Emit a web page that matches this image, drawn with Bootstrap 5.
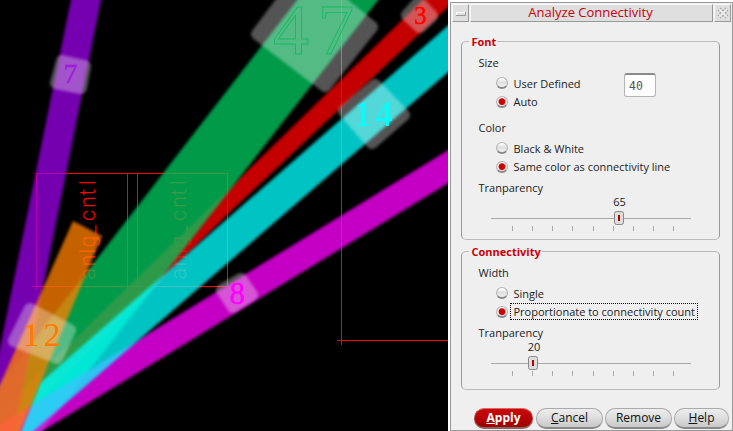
<!DOCTYPE html>
<html lang="en">
<head>
<meta charset="utf-8">
<meta name="viewport" content="width=device-width, initial-scale=1">
<title>Analyze Connectivity</title>
<link href="https://cdn.jsdelivr.net/npm/bootstrap@5.3.0/dist/css/bootstrap.min.css" rel="stylesheet">
<style>
body{width:733px;height:431px;background:#fff;font-family:"Open Sans","Noto Sans",sans-serif;font-size:11px;line-height:15px;color:#1c1c1c}
.scene{width:448px;height:431px;background:#000}
.scene svg{display:block}
.dialog{width:283px;height:429px;margin:2px 0 0 2px;background:#efefef;border:1px solid #999}
.titlebar{height:18px;margin:1px;gap:1px}
.bevel{background:#dfdfdf;border:1px solid;border-color:#f8f8f8 #999 #999 #f8f8f8}
.tb-btn{width:17px}
.caption{color:#c8000a;font-size:13px;line-height:14px;padding-right:2px}
.group{position:relative;width:259px;margin-left:10px;border:1px solid #999;border-top-color:#bbb;border-bottom-color:#bbb;border-radius:5px;padding-left:16.5px}
.group-font{height:199px;margin-top:19px;padding-top:13px}
.group-conn{height:139px;margin-top:11px;padding-top:13px}
.group-title{position:absolute;left:6.5px;top:-8px;padding:0 1px 0 3px;background:#efefef;color:#c8000a;font-weight:700}
.opt{height:18.5px;padding-left:17.5px;gap:5.5px}
.opts{padding-top:4px}
.next-block{padding-top:9px}
.radio-dot{width:12px;height:12px;border-radius:50%;border:1px solid #b4b4b4;border-bottom:2px solid #888;background:linear-gradient(#fff 10%,#ddd 50%,#f4f4f4);flex:none}
.radio-dot.on{background:radial-gradient(circle at 50% 52%,#c00 0 2.8px,#f6f6f6 4px)}
.size-box{width:32px;height:24px;margin:3px 63px 0 0;border:1px solid #b5b5b5;border-top:2px solid #8b8b8b;border-radius:3px;background:#fff;color:#555;font:11.5px/22px "DejaVu Sans Mono",monospace;padding-left:4px}
.focused{outline:1px dotted #000;margin:0 -3px;padding:0 2px 0 3px}
.slider{display:block;margin-left:12.5px}
.actions{margin:18px 0 0 23px;gap:2px}
.pill{height:21px;padding:0;border-radius:10px;font-size:12px;line-height:18px;color:#111;border:1px solid #aaa;border-bottom:2px solid #888;background:linear-gradient(#eee,#ddd 50%,#c9c9c9)}
.pill-main{background:linear-gradient(#c90808,#a00000);border-color:#d66 #b44 #866;color:#fff;font-weight:700;margin-right:1px}
.w-apply{width:59px}.w-mid{width:67px}.w-help{width:55px}
</style>
</head>
<body class="d-flex overflow-hidden m-0">
<main class="scene flex-shrink-0">
<svg width="448" height="431" viewBox="0 0 448 431">
<defs><filter id="soft" x="-5%" y="-5%" width="110%" height="110%"><feGaussianBlur stdDeviation="1.5"/></filter></defs>
<g stroke="#f00" fill="none" shape-rendering="crispEdges">
<path d="M36.5 173V290M127.500 173V290M36 173.500H228M32 286.500H228M137.500 173V286M227.500 173V287"/>
<path d="M341.500 0V345M337 340.500H448"/>
</g>
<g fill="#f00" font-family="Roboto, sans-serif" font-weight="300" font-size="21.500">
<text transform="translate(95 279.500) rotate(-90)" x="0 13 26 32 45 58.500 71.500 84 94.500">anlg_cntl</text>
<text transform="translate(186 279.500) rotate(-90)" x="0 13 26 32 45 58.500 71.500 84 94.500">anlg_cntl</text>
</g>
<g opacity=".77" filter="url(#soft)"><path fill="#f00" d="M433 -10L466 -10L228 214L20 420L-20 431Z"/></g>
<g opacity=".77" filter="url(#soft)"><path fill="#00c961" d="M305 -10L386 -10L34 441L-44 441Z"/></g>
<g opacity=".77" filter="url(#soft)"><path fill="#9900e5" d="M73 -10L103 -10L12 441L-19 441Z"/></g>
<g opacity=".77" filter="url(#soft)"><path fill="#f0f" d="M468 138L468 171L26 441L-27 441Z"/></g>
<g opacity=".77" filter="url(#soft)"><path fill="#0ff" d="M468 8L468 55L22 441L17 441L40 383Z"/></g>
<g opacity=".77" filter="url(#soft)"><path fill="#ff8000" d="M73 221L102 236L16 441L-25 441Z"/></g>
<g fill="#fff" stroke="#fff" stroke-linejoin="round" stroke-width="12" filter="url(#soft)">
<path opacity=".33" d="M62 61L85 66L81 88L56 83Z"/>
<path opacity=".33" d="M257 34L325 86L372 27L304 -28Z"/>
<path opacity=".33" d="M407 15L420 27L432 16L419 2Z"/>
<path opacity=".33" d="M344 111L372 143L404 115L375 85Z"/>
<path opacity=".33" d="M222 290L241 279L252 295L233 307Z"/>
<path opacity=".33" d="M30 309L70 330L57 358L14 341Z"/>
</g>
<g font-family="Liberation Serif, serif">
<text x="63.500" y="83" font-size="28" fill="#a01be0" stroke="#a01be0" stroke-width=".5">7</text>
<text x="273" y="53.500" font-size="72" fill="none" stroke="#16b964" stroke-width=".9" letter-spacing="9">47</text>
<text x="414" y="24" font-size="25" fill="#f00" stroke="#f00" stroke-width=".5">3</text>
<text x="354" y="126" font-size="35" fill="#0ff" letter-spacing="3.500">14</text>
<text x="229.500" y="304" font-size="31" fill="#f0f" stroke="#f0f" stroke-width=".5">8</text>
<text x="22.500" y="346" font-size="34" fill="#ff7b00" letter-spacing="4">12</text>
</g>
</svg>
</main>
<section class="dialog flex-shrink-0">
<header class="titlebar d-flex">
<div class="bevel tb-btn"><svg class="d-block" width="15" height="15"><path d="M3 7.500H13M3.500 7V10" stroke="#fff" fill="none"/><path d="M3 10.500H12.500V7" stroke="#999" fill="none"/></svg></div>
<div class="bevel caption flex-grow-1 text-center">Analyze Connectivity</div>
<div class="bevel tb-btn"><svg class="d-block" width="15" height="15"><path d="M4 4L12 12M12 4L4 12" stroke="#999" stroke-width="4" stroke-dasharray="1.500 1"/><path d="M4 4L12 12M12 4L4 12" stroke="#eee" stroke-width="2"/></svg></div>
</header>
<section class="group group-font">
<div class="group-title">Font</div>
<div>Size</div>
<div class="d-flex justify-content-between">
<div class="opts">
<div class="opt d-flex align-items-center"><i class="radio-dot"></i><span>User Defined</span></div>
<div class="opt d-flex align-items-center"><i class="radio-dot on"></i><span>Auto</span></div>
</div>
<div class="size-box">40</div>
</div>
<div class="next-block">Color</div>
<div class="opts">
<div class="opt d-flex align-items-center"><i class="radio-dot"></i><span>Black &amp; White</span></div>
<div class="opt d-flex align-items-center"><i class="radio-dot on"></i><span>Same color as connectivity line</span></div>
</div>
<div class="pt-1">Tranparency</div>
<svg class="slider" width="202" height="38"><text x="128.500" y="10.500" text-anchor="middle" fill="#1c1c1c">65</text><path d="M0 23.500H200M21.500 31V36M41.500 31V36M61.500 31V36M81.500 31V36M102.500 31V36M122.500 31V36M142.500 31V36M162.500 31V36M182.500 31V36" stroke="#aaa"/><rect x="123.500" y="16.500" width="9" height="13" rx="2" fill="#ddd" stroke="#888"/><path d="M128 20V26" stroke="#b00000" stroke-width="2"/></svg>
</section>
<section class="group group-conn">
<div class="group-title">Connectivity</div>
<div>Width</div>
<div class="opts">
<div class="opt d-flex align-items-center"><i class="radio-dot"></i><span>Single</span></div>
<div class="opt d-flex align-items-center"><i class="radio-dot on"></i><span class="focused">Proportionate to connectivity count</span></div>
</div>
<div class="pt-1">Tranparency</div>
<svg class="slider" width="202" height="38"><text x="43" y="11" text-anchor="middle" fill="#1c1c1c">20</text><path d="M0 23.500H200M21.500 31V36M41.500 31V36M61.500 31V36M81.500 31V36M102.500 31V36M122.500 31V36M142.500 31V36M162.500 31V36M182.500 31V36" stroke="#aaa"/><rect x="37.500" y="16.500" width="9" height="13" rx="2" fill="#ddd" stroke="#888"/><path d="M42 20V26" stroke="#b00000" stroke-width="2"/></svg>
</section>
<footer class="actions d-flex">
<button class="btn pill pill-main w-apply"><u>A</u>pply</button>
<button class="btn pill w-mid"><u>C</u>ancel</button>
<button class="btn pill w-mid">Remove</button>
<button class="btn pill w-help"><u>H</u>elp</button>
</footer>
</section>
<script src="https://cdn.jsdelivr.net/npm/bootstrap@5.3.0/dist/js/bootstrap.bundle.min.js"></script>
</body>
</html>
